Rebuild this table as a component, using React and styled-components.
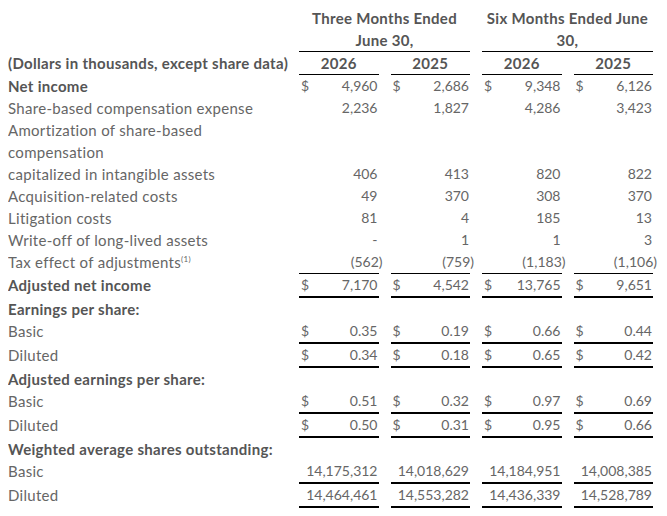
import React from 'react'
import styled, { createGlobalStyle } from 'styled-components'

const GlobalStyle = createGlobalStyle`
    body {
        margin: 7px 8px;
        background: #ffffff;
        font-family: "Lato", "Liberation Sans", sans-serif;
    }
`;

const Table = styled.div`
    width: 645px;
    display: grid;
    grid-template-columns: 279px repeat(4, 1fr);
    column-gap: 12px;
    font-size: 15px;
    letter-spacing: 0.3px;
    line-height: 22px;
    color: #666666;
`;

const Label = styled.div`
    grid-column: ${p => (p.$wide ? '1 / -1' : 'auto')};
    white-space: nowrap;
    font-weight: ${p => (p.$bold ? 700 : 400)};
    color: ${p => (p.$bold ? '#555555' : '#666666')};
`;

const Note = styled.sup`
    font-size: 8px;
    line-height: 0;
    vertical-align: 6px;
`;

const GroupHead = styled.div`
    grid-column: span 2;
    text-align: center;
    font-weight: 700;
    color: #555555;
    border-bottom: 1px solid #000000;
`;

const Year = styled.div`
    text-align: center;
    font-weight: 700;
    color: #555555;
    border-bottom: 1px solid #000000;
`;

const Cell = styled.div`
    display: flex;
    justify-content: space-between;
    padding: 0 1px 0 2px;
    font-size: 14px;
    letter-spacing: 0;
    border-bottom: ${p =>
        p.$rule === 'thick' ? '2px solid #000000' : p.$rule === 'thin' ? '1px solid #000000' : 'none'};
`;

const Amount = styled.span`
    margin-left: auto;
    margin-right: ${p => (p.$neg ? '-5px' : '0')};
`;

const rows = [
    { label: 'Net income', bold: true, dollar: true, values: ['4,960', '2,686', '9,348', '6,126'] },
    { label: 'Share-based compensation expense', values: ['2,236', '1,827', '4,286', '3,423'] },
    { label: 'Amortization of share-based' },
    { label: 'compensation' },
    { label: 'capitalized in intangible assets', values: ['406', '413', '820', '822'] },
    { label: 'Acquisition-related costs', values: ['49', '370', '308', '370'] },
    { label: 'Litigation costs', values: ['81', '4', '185', '13'] },
    { label: 'Write-off of long-lived assets', values: ['-', '1', '1', '3'] },
    { label: 'Tax effect of adjustments', note: '(1)', values: ['(562)', '(759)', '(1,183)', '(1,106)'], rule: 'thin' },
    { label: 'Adjusted net income', bold: true, dollar: true, values: ['7,170', '4,542', '13,765', '9,651'], rule: 'thick' },
    { label: 'Earnings per share:', bold: true },
    { label: 'Basic', dollar: true, values: ['0.35', '0.19', '0.66', '0.44'], rule: 'thick' },
    { label: 'Diluted', dollar: true, values: ['0.34', '0.18', '0.65', '0.42'], rule: 'thick' },
    { label: 'Adjusted earnings per share:', bold: true },
    { label: 'Basic', dollar: true, values: ['0.51', '0.32', '0.97', '0.69'], rule: 'thick' },
    { label: 'Diluted', dollar: true, values: ['0.50', '0.31', '0.95', '0.66'], rule: 'thick' },
    { label: 'Weighted average shares outstanding:', bold: true },
    { label: 'Basic', values: ['14,175,312', '14,018,629', '14,184,951', '14,008,385'], rule: 'thick' },
    { label: 'Diluted', values: ['14,464,461', '14,553,282', '14,436,339', '14,528,789'], rule: 'thick' },
];

export default function App() {
    return (
        <>
            <GlobalStyle />
            <Table>
                <Label />
                <GroupHead>Three Months Ended<br />June 30,</GroupHead>
                <GroupHead>Six Months Ended June<br />30,</GroupHead>

                <Label $bold>(Dollars in thousands, except share data)</Label>
                <Year>2026</Year>
                <Year>2025</Year>
                <Year>2026</Year>
                <Year>2025</Year>

                {rows.map((row, i) => (
                    <React.Fragment key={i}>
                        <Label $bold={row.bold} $wide={!row.values}>
                            {row.label}
                            {row.note && <Note>{row.note}</Note>}
                        </Label>
                        {row.values && row.values.map((v, j) => (
                            <Cell key={j} $rule={row.rule}>
                                {row.dollar && <span>$</span>}
                                <Amount $neg={v.startsWith('(')}>{v}</Amount>
                            </Cell>
                        ))}
                    </React.Fragment>
                ))}
            </Table>
        </>
    )
}
